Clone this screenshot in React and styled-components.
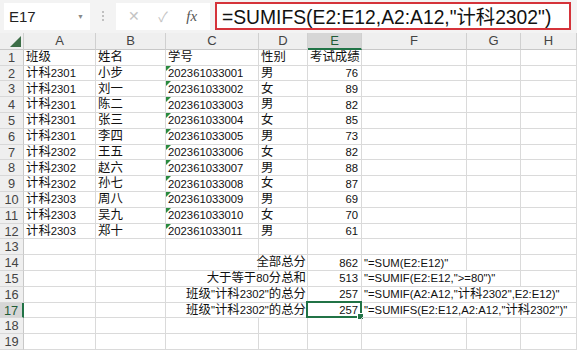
import React, { Component } from 'react';
import styled, { createGlobalStyle } from 'styled-components';

const GlobalStyle = createGlobalStyle`
    html, body {
        margin: 0;
        padding: 0;
        background-color: #ffffff;
        overflow: hidden;
    }
    body {
        font-family: "Liberation Sans", "Noto Sans CJK SC", sans-serif;
    }
`

const ROW_H = 15.8;
const COLS = ['A', 'B', 'C', 'D', 'E', 'F', 'G', 'H'];

const Sheet = styled.div`
    display: flex;
    flex-direction: column;
    width: 577px;
    height: 350px;
    overflow: hidden;
`

// -- Formula bar --

const Toolbar = styled.div`
    display: flex;
    align-items: center;
    height: 43px;
    padding: 0 6px 0 4px;
    box-sizing: border-box;
    background-color: #f3f3f3;
`

const NameBox = styled.div`
    display: flex;
    width: 86px;
    height: 27px;
    align-items: center;
    justify-content: space-between;
    padding: 0 6px 0 5px;
    box-sizing: border-box;
    background-color: #ffffff;
    font-size: 15px;
    color: #222222;
`

const Caret = styled.span`
    font-size: 7px;
    color: #888888;
`

const Grip = styled.div`
    display: flex;
    flex-direction: column;
    width: 26px;
    align-items: center;
    gap: 2px;

    div {
        width: 2px;
        height: 2px;
        background-color: #c0c0c0;
    }
`

const FuncBox = styled.div`
    display: flex;
    width: 94px;
    height: 27px;
    align-items: center;
    justify-content: space-around;
    padding: 0 4px;
    box-sizing: border-box;
    background-color: #ffffff;
`

const FuncIcon = styled.span`
    display: flex;
    width: 22px;
    justify-content: center;
    font-family: ${props => props.serif ? '"Liberation Serif", serif' : 'inherit'};
    font-style: ${props => props.serif ? 'italic' : 'normal'};
    font-size: ${props => props.serif ? '15px' : '14px'};
    color: ${props => props.serif ? '#555555' : '#c4c4c4'};
`

const FormulaBox = styled.div`
    display: flex;
    flex-grow: 1;
    height: 28px;
    margin-left: 5px;
    align-items: center;
    padding-left: 5px;
    box-sizing: border-box;
    border: 2px solid #d5333a;
    background-color: #ffffff;
    font-size: 19.3px;
    color: #111111;
    white-space: nowrap;
`

// -- Grid --

const Grid = styled.div`
    display: grid;
    grid-template-columns: 24px 72px 70px 93px 49px 54px 105px 54px 1fr;
    grid-template-rows: 17px;
    grid-auto-rows: ${ROW_H}px;
    font-size: 11.3px;
    color: #111111;
`

const ColHeader = styled.div`
    position: relative;
    display: flex;
    align-items: center;
    justify-content: center;
    box-sizing: border-box;
    background-color: ${props => props.active ? '#d6d6d6' : '#efefef'};
    border-right: 1px solid #d0d0d0;
    border-bottom: ${props => props.active ? '2px solid #217346' : '1px solid #c8c8c8'};
    font-size: 13px;
    color: ${props => props.active ? '#1f5c36' : '#444444'};
`

const Corner = styled.div`
    position: absolute;
    right: 2px;
    bottom: 2px;
    width: 0;
    height: 0;
    border-left: 11px solid transparent;
    border-bottom: 11px solid #3c6e47;
`

const RowHeader = styled.div`
    display: flex;
    align-items: center;
    justify-content: center;
    box-sizing: border-box;
    background-color: ${props => props.active ? '#d6d6d6' : '#efefef'};
    border-right: ${props => props.active ? '2px solid #217346' : '1px solid #c8c8c8'};
    border-bottom: 1px solid #d8d8d8;
    font-size: 12.8px;
    color: ${props => props.active ? '#1f5c36' : '#444444'};
`

const Cell = styled.div`
    position: relative;
    display: flex;
    align-items: center;
    justify-content: ${props => props.right ? 'flex-end' : 'flex-start'};
    grid-column: span ${props => props.span || 1};
    padding: ${props => props.right ? `0 ${props.tight ? 1 : 3}px 0 0` : '0 0 0 2px'};
    box-sizing: border-box;
    border-right: 1px solid #dadada;
    border-bottom: 1px solid #dadada;
    white-space: nowrap;
    overflow: visible;
`

// CJK glyphs in the sheet font sit a little larger than the latin ones
const Han = styled.span`
    font-size: 12.4px;
    line-height: 1;
`

const TextFlag = styled.div`
    position: absolute;
    top: 0;
    left: 0;
    width: 0;
    height: 0;
    border-top: 5px solid #2a8a3e;
    border-right: 5px solid transparent;
`

const Selection = styled.div`
    position: absolute;
    top: -2px;
    left: -2px;
    right: -1px;
    bottom: -1px;
    border: 2px solid #217346;
    pointer-events: none;

    &::after {
        content: '';
        position: absolute;
        right: -4px;
        bottom: -4px;
        width: 5px;
        height: 5px;
        background-color: #217346;
        border: 1px solid #ffffff;
    }
`

const students = [
    ['计科2301', '小步', '202361033001', '男', 76],
    ['计科2301', '刘一', '202361033002', '女', 89],
    ['计科2301', '陈二', '202361033003', '男', 82],
    ['计科2301', '张三', '202361033004', '女', 85],
    ['计科2301', '李四', '202361033005', '男', 73],
    ['计科2302', '王五', '202361033006', '女', 82],
    ['计科2302', '赵六', '202361033007', '男', 88],
    ['计科2302', '孙七', '202361033008', '女', 87],
    ['计科2303', '周八', '202361033009', '男', 69],
    ['计科2303', '吴九', '202361033010', '女', 70],
    ['计科2303', '郑十', '202361033011', '男', 61],
];

const summary = [
    { row: 14, label: '全部总分', wide: false, value: 862, formula: '"=SUM(E2:E12)"', span: 1 },
    { row: 15, label: '大于等于80分总和', wide: true, value: 513, formula: '"=SUMIF(E2:E12,">=80")"', span: 2 },
    { row: 16, label: '班级"计科2302"的总分', wide: true, value: 257, formula: '"=SUMIF(A2:A12,"计科2302",E2:E12)"', span: 3 },
    { row: 17, label: '班级"计科2302"的总分', wide: true, value: 257, formula: '"=SUMIFS(E2:E12,A2:A12,"计科2302")"', span: 3, selected: true },
];

const txt = (s) => {
    return String(s).split(/([\u4e00-\u9fff]+)/).map((part, i) =>
        /[\u4e00-\u9fff]/.test(part) ? <Han key={i}>{part}</Han> : part
    );
};

const emptyCells = (n) => {
    const out = [];
    for (let i = 0; i < n; i++) out.push(<Cell key={'e' + i} />);
    return out;
};

class App extends Component {

    // -- Renders --

    renderToolbar = () => {
        return (
            <Toolbar>
                <NameBox>
                    E17
                    <Caret>▼</Caret>
                </NameBox>
                <Grip>
                    <div />
                    <div />
                    <div />
                </Grip>
                <FuncBox>
                    <FuncIcon>✕</FuncIcon>
                    <FuncIcon>✓</FuncIcon>
                    <FuncIcon serif>fx</FuncIcon>
                </FuncBox>
                <FormulaBox>=SUMIFS(E2:E12,A2:A12,"计科2302")</FormulaBox>
            </Toolbar>
        );
    }

    renderHeader = () => {
        return [
            <ColHeader key="corner"><Corner /></ColHeader>,
            ...COLS.map(c => <ColHeader key={c} active={c === 'E'}>{c}</ColHeader>),
        ];
    }

    renderStudents = () => {
        const rows = [
            <React.Fragment key="r1">
                <RowHeader>1</RowHeader>
                <Cell>{txt('班级')}</Cell>
                <Cell>{txt('姓名')}</Cell>
                <Cell>{txt('学号')}</Cell>
                <Cell>{txt('性别')}</Cell>
                <Cell>{txt('考试成绩')}</Cell>
                {emptyCells(3)}
            </React.Fragment>,
        ];
        students.forEach((s, i) => {
            rows.push(
                <React.Fragment key={'r' + (i + 2)}>
                    <RowHeader>{i + 2}</RowHeader>
                    <Cell>{txt(s[0])}</Cell>
                    <Cell>{txt(s[1])}</Cell>
                    <Cell><TextFlag />{s[2]}</Cell>
                    <Cell>{txt(s[3])}</Cell>
                    <Cell right>{s[4]}</Cell>
                    {emptyCells(3)}
                </React.Fragment>
            );
        });
        return rows;
    }

    renderBlank = (n) => {
        return (
            <React.Fragment key={'r' + n}>
                <RowHeader>{n}</RowHeader>
                {emptyCells(8)}
            </React.Fragment>
        );
    }

    renderSummary = () => {
        return summary.map(s => (
            <React.Fragment key={'r' + s.row}>
                <RowHeader active={s.selected}>{s.row}</RowHeader>
                <Cell />
                <Cell />
                {s.wide
                    ? <Cell right tight span={2}>{txt(s.label)}</Cell>
                    : <><Cell /><Cell right tight>{txt(s.label)}</Cell></>}
                <Cell right>
                    {s.value}
                    {s.selected && <Selection />}
                </Cell>
                <Cell span={s.span}>{txt(s.formula)}</Cell>
                {emptyCells(3 - s.span)}
            </React.Fragment>
        ));
    }

    render() {
        return (
            <Sheet>
                <GlobalStyle />
                {this.renderToolbar()}
                <Grid>
                    {this.renderHeader()}
                    {this.renderStudents()}
                    {this.renderBlank(13)}
                    {this.renderSummary()}
                    {this.renderBlank(18)}
                    {this.renderBlank(19)}
                </Grid>
            </Sheet>
        );
    }
}

export default App;
